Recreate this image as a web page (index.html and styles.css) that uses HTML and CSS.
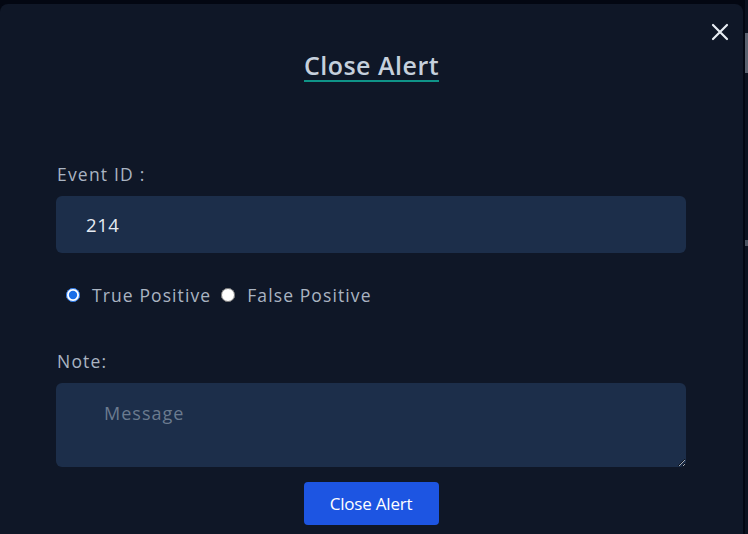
FILE: index.html
```html
<!DOCTYPE html>
<html lang="en">
<head>
<meta charset="utf-8">
<title>Close Alert</title>
<link rel="stylesheet" href="styles.css">
</head>
<body>
<div class="modal">
  <button class="close-x" aria-label="Close">
    <svg width="18" height="18" viewBox="0 0 18 18"><path d="M2 2 L16 16 M16 2 L2 16" stroke="#e8edf3" stroke-width="2.2" stroke-linecap="round"/></svg>
  </button>
  <div class="title-wrap"><h2 class="title">Close Alert</h2></div>
  <form class="form">
    <label class="label">Event ID :</label>
    <input class="field" type="text" value="214">
    <div class="radios">
      <label class="radio"><input type="radio" name="r" checked> True Positive</label>
      <label class="radio"><input type="radio" name="r"> False Positive</label>
    </div>
    <label class="label note">Note:</label>
    <textarea class="area" placeholder="Message"></textarea>
    <div class="actions"><button type="button" class="btn">Close Alert</button></div>
  </form>
  <div class="scrollbar"><div class="thumb"></div><div class="thumb2"></div></div>
</div>
</body>
</html>
```
FILE: styles.css
```css
html, body { margin: 0; padding: 0; }
body {
  background: #030712;
  font-family: "Open Sans", "Noto Sans", sans-serif;
  overflow: hidden;
  height: 534px;
}
.modal {
  position: relative;
  margin-top: 4px;
  width: 743px;
  height: 530px;
  background: #0f1727;
  border-radius: 8px 8px 0 0;
}
.close-x {
  position: absolute;
  top: 19px;
  right: 14px;
  background: none;
  border: 0;
  padding: 0;
  width: 18px;
  height: 18px;
}
.title-wrap { display: flex; justify-content: center; padding-top: 46px; }
.title {
  margin: 0;
  font-size: 25px;
  line-height: 30px;
  font-weight: 600;
  color: #c5d0dc;
  border-bottom: 2px solid #0f9488;
  letter-spacing: 0.5px;
}
.form {
  display: flex;
  flex-direction: column;
  padding: 0 57px 0 56px;
  margin-top: 80px;
}
.label {
  font-size: 17.5px;
  line-height: 24px;
  color: #aab4c2;
  letter-spacing: 1.2px;
  padding-left: 1px;
}
.field {
  margin-top: 10px;
  height: 57px;
  box-sizing: border-box;
  border: 0;
  border-radius: 6px;
  background: #1c2e4a;
  color: #e6ebf1;
  font-family: inherit;
  font-size: 18.5px;
  padding: 0 30px;
  letter-spacing: 0.6px;
  outline: none;
}
.radios {
  display: flex;
  gap: 10px;
  margin-top: 30px;
  padding-left: 10px;
}
.radio {
  display: flex;
  align-items: center;
  gap: 12px;
  font-size: 17.5px;
  line-height: 24px;
  color: #aab4c2;
  letter-spacing: 1.1px;
}
.radio input { margin: 0; width: 14px; height: 14px; accent-color: #1a6ee8; }
.note { margin-top: 42px; }
.area {
  margin-top: 10px;
  height: 84px;
  box-sizing: border-box;
  border: 0;
  border-radius: 6px;
  background: #1c2e4a;
  color: #e6ebf1;
  font-family: inherit;
  font-size: 18px;
  padding: 18px 48px;
  letter-spacing: 1px;
  outline: none;
}
.area::placeholder { color: #6b7b8f; }
.actions { display: flex; justify-content: center; margin-top: 15px; }
.btn {
  width: 135px;
  height: 43px;
  border: 0;
  border-radius: 4px;
  background: #1d55e2;
  color: #ffffff;
  font-family: inherit;
  font-size: 17px;
  letter-spacing: -0.2px;
}
.scrollbar {
  position: absolute;
  top: -4px;
  right: -5px;
  width: 3px;
  height: 534px;
  background: #0b1220;
}
.thumb { position: absolute; top: 33px; left: 0; width: 3px; height: 40px; background: #5a6270; }
.thumb2 { position: absolute; top: 240px; left: 0; width: 3px; height: 6px; background: #4a5260; }
```
